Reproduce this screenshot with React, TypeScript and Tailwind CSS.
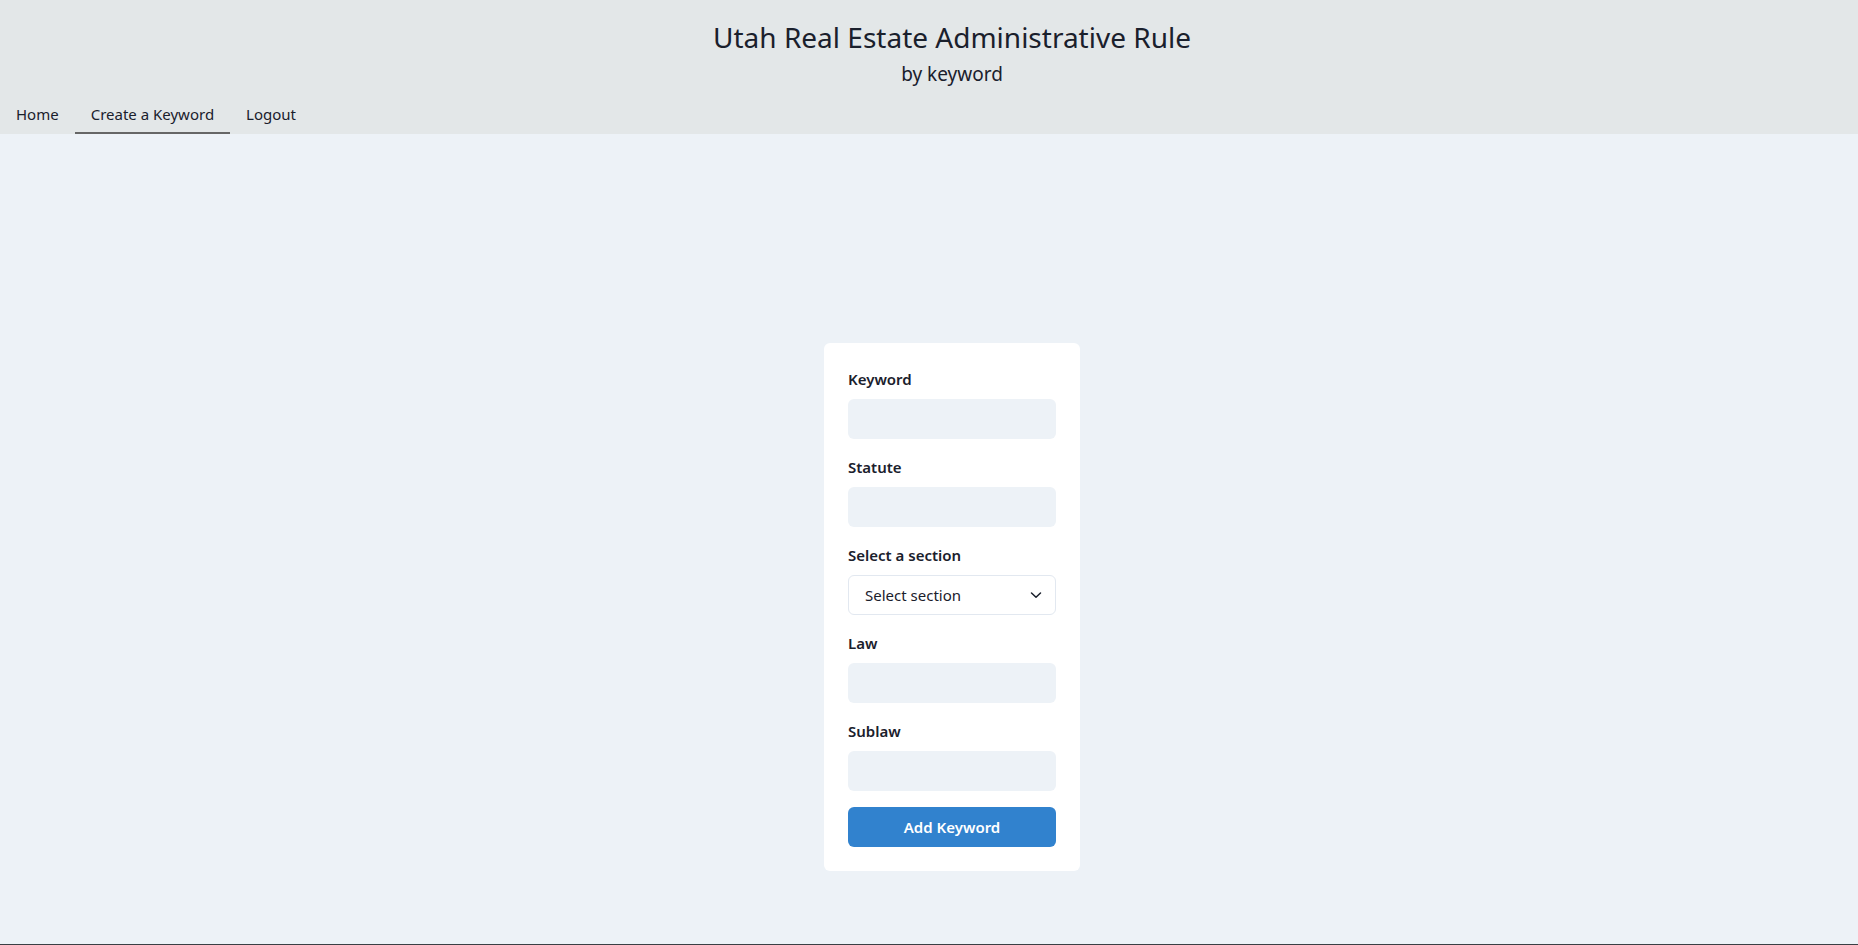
import React from "react";

const font = { fontFamily: '"Noto Sans", "Open Sans", sans-serif' };

function Field({ label }: { label: string }) {
  return (
    <div className="flex flex-col">
      <label className="text-[15px] leading-[24px] font-semibold text-[#1a202c] mb-2">{label}</label>
      <input className="h-10 w-full rounded-md bg-[#edf2f7] px-4 outline-none" />
    </div>
  );
}

export default function App() {
  return (
    <div className="min-h-[945px] flex flex-col bg-[#edf2f7] text-[#1a202c] border-b border-[#3a3f44]" style={font}>
      <header className="bg-[#e3e7e8] h-[134px] flex flex-col">
        <div className="pl-[46px] text-center pt-[19px]">
          <h1 className="text-[28px] leading-[36px] font-normal">Utah Real Estate Administrative Rule</h1>
          <p className="text-[19px] leading-[28px] mt-[5px]">by keyword</p>
        </div>
        <nav className="mt-auto flex text-[15px]">
          <a className="px-4 h-[42px] pt-[4px] flex items-center border-b-2 border-transparent">Home</a>
          <a className="px-4 h-[42px] pt-[4px] flex items-center border-b-2 border-[#666]">Create a Keyword</a>
          <a className="px-4 h-[42px] pt-[4px] flex items-center border-b-2 border-transparent">Logout</a>
        </nav>
      </header>
      <main className="flex-1 pt-[209px] pl-[46px] flex justify-center items-start">
        <form className="w-[256px] bg-white rounded-md p-6 flex flex-col gap-4">
          <Field label="Keyword" />
          <Field label="Statute" />
          <div className="flex flex-col">
            <label className="text-[15px] leading-[24px] font-semibold mb-2">Select a section</label>
            <div className="h-10 rounded-md border border-[#e2e8f0] bg-white flex items-center justify-between pl-4 pr-[13px] text-[15px]">
              <span>Select section</span>
              <svg width="12" height="8" viewBox="0 0 12 8" fill="none" stroke="#1a202c" strokeWidth="1.5" strokeLinecap="round" strokeLinejoin="round">
                <polyline points="1.5,2 6,6.3 10.5,2" />
              </svg>
            </div>
          </div>
          <Field label="Law" />
          <Field label="Sublaw" />
          <button type="button" className="h-10 rounded-md bg-[#3182ce] text-white font-semibold text-[15px]">Add Keyword</button>
        </form>
      </main>
    </div>
  );
}
